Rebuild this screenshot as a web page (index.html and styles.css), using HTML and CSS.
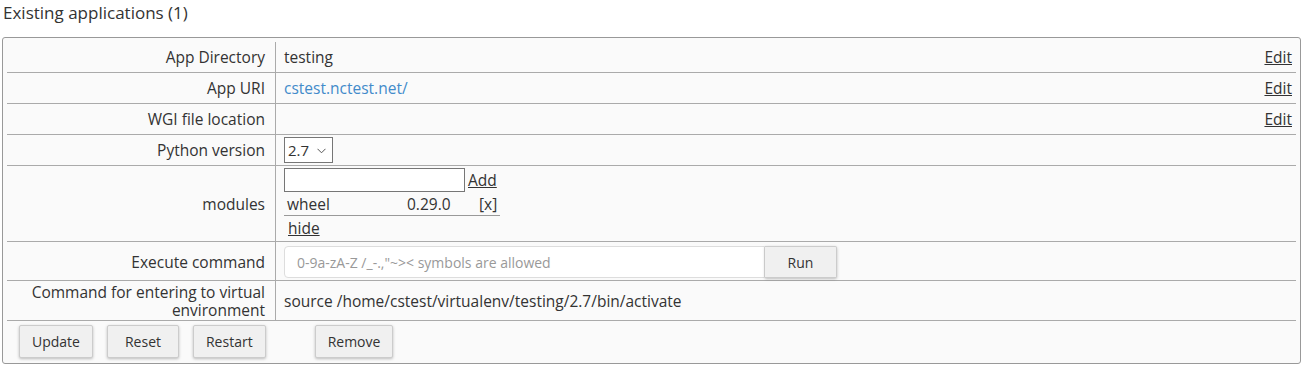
FILE: index.html
```html
<!DOCTYPE html>
<html lang="en">
<head>
    <meta charset="UTF-8">
    <meta name="viewport" content="width=device-width, initial-scale=1.0">
    <title>Existing applications</title>
    <link rel="stylesheet" href="styles.css">
</head>
<body>
    <h3 class="title">Existing applications (1)</h3>

    <div class="app-box">
        <table class="app-table">
            <tr>
                <td class="label">App Directory</td>
                <td class="value">
                    <span>testing</span>
                    <a href="#" class="edit">Edit</a>
                </td>
            </tr>
            <tr>
                <td class="label">App URI</td>
                <td class="value">
                    <a href="#" class="uri">cstest.nctest.net/</a>
                    <a href="#" class="edit">Edit</a>
                </td>
            </tr>
            <tr>
                <td class="label">WGI file location</td>
                <td class="value">
                    <span></span>
                    <a href="#" class="edit">Edit</a>
                </td>
            </tr>
            <tr class="version-row">
                <td class="label">Python version</td>
                <td class="value">
                    <span class="select-wrap">
                        <select class="version">
                            <option>2.7</option>
                            <option>3.6</option>
                        </select>
                        <svg class="chevron" width="9" height="6" viewBox="0 0 9 6">
                            <path d="M0.5 0.8 L4.5 4.8 L8.5 0.8" fill="none" stroke="#555" stroke-width="1"/>
                        </svg>
                    </span>
                </td>
            </tr>
            <tr class="modules-row">
                <td class="label">modules</td>
                <td class="value">
                    <div class="add-line">
                        <input type="text" class="module-input">
                        <a href="#" class="plain-link">Add</a>
                    </div>
                    <div class="module">
                        <span class="mod-name">wheel</span>
                        <span class="mod-ver">0.29.0</span>
                        <a href="#" class="mod-del">[x]</a>
                    </div>
                    <div class="hide-line"><a href="#" class="plain-link">hide</a></div>
                </td>
            </tr>
            <tr class="exec-row">
                <td class="label">Execute command</td>
                <td class="value">
                    <div class="exec">
                        <input type="text" class="cmd-input" placeholder="0-9a-zA-Z /_-.,&quot;~&gt;&lt; symbols are allowed">
                        <button class="btn run">Run</button>
                    </div>
                </td>
            </tr>
            <tr class="venv-row">
                <td class="label">Command for entering to virtual environment</td>
                <td class="value">source /home/cstest/virtualenv/testing/2.7/bin/activate</td>
            </tr>
        </table>

        <div class="actions">
            <button class="btn">Update</button>
            <button class="btn">Reset</button>
            <button class="btn">Restart</button>
            <button class="btn remove">Remove</button>
        </div>
    </div>
</body>
</html>
```

FILE: styles.css
```css
body {
    margin: 0;
    font-family: "Open Sans", "Liberation Sans", sans-serif;
    font-size: 15.5px;
    color: #333;
    background: #fff;
}
.title {
    margin: 0;
    padding: 2px 0 0 3px;
    font-size: 17px;
    font-weight: normal;
    line-height: 22px;
}
.app-box {
    margin: 13px 1px 0 2px;
    border: 1px solid #999;
    border-radius: 3px;
    background: #fafafa;
    padding: 4px 4px 0 4px;
}
.app-table {
    width: 100%;
    border-collapse: collapse;
}
.app-table td {
    border-bottom: 1px solid #aaa;
    padding: 5px 10px;
    line-height: 20px;
    vertical-align: middle;
}
.label {
    width: 248px;
    text-align: right;
    border-right: 1px solid #aaa;
}
.app-table td.value {
    text-align: left;
    padding-left: 8px;
}
.edit {
    float: right;
    color: #333;
    margin-right: -6px;
}
.uri {
    color: #428bca;
    text-decoration: none;
}
.version-row td {
    padding-top: 2px;
    padding-bottom: 2px;
}
.select-wrap {
    position: relative;
    display: inline-block;
    vertical-align: middle;
}
.version {
    display: block;
    appearance: none;
    -webkit-appearance: none;
    font-family: inherit;
    font-size: 15px;
    color: #333;
    height: 26px;
    width: 49px;
    border: 1px solid #767676;
    border-radius: 0;
    background: #fff;
    padding: 0 3px;
}
.chevron {
    position: absolute;
    right: 7px;
    top: 11px;
    pointer-events: none;
}
.modules-row td {
    padding-top: 1px;
    padding-bottom: 0;
}
.add-line {
    display: flex;
    align-items: center;
    gap: 3px;
    height: 25px;
}
.module-input {
    width: 175px;
    height: 18px;
    border: 1px solid #767676;
    border-radius: 0;
    padding: 2px;
    background: #fff;
    font-family: inherit;
}
.plain-link {
    color: #333;
}
.module {
    width: 216px;
    display: flex;
    border-bottom: 1px solid #999;
    height: 23px;
    align-items: center;
}
.mod-name {
    width: 120px;
    padding-left: 3px;
}
.mod-ver {
    width: 72px;
}
.mod-del {
    color: #333;
    text-decoration: none;
}
.hide-line {
    height: 25px;
    line-height: 25px;
    padding-left: 4px;
}
.exec-row td {
    padding-top: 4px;
    padding-bottom: 2px;
}
.exec {
    display: flex;
}
.cmd-input {
    width: 481px;
    height: 32px;
    box-sizing: border-box;
    border: 1px solid #ddd;
    border-radius: 4px 0 0 4px;
    padding: 0 12px;
    font-family: inherit;
    font-size: 14px;
    background: #fff;
}
.cmd-input::placeholder {
    color: #999;
}
.btn {
    font-family: inherit;
    font-size: 14px;
    color: #333;
    background: #f0f0f0;
    border: 1px solid #ccc;
    border-radius: 2px;
    box-shadow: 0 1px 3px rgba(0, 0, 0, 0.25);
    min-width: 72px;
    height: 33px;
    padding: 0 12px;
    cursor: pointer;
}
.run {
    border-radius: 0 2px 2px 0;
    height: 32px;
    border-left: none;
}
.venv-row td {
    padding-top: 2px;
    padding-bottom: 1px;
    line-height: 18px;
}
.actions {
    display: flex;
    gap: 14px;
    padding: 4px 0 5px 12px;
}
.remove {
    margin-left: 35px;
    min-width: 78px;
}
```
